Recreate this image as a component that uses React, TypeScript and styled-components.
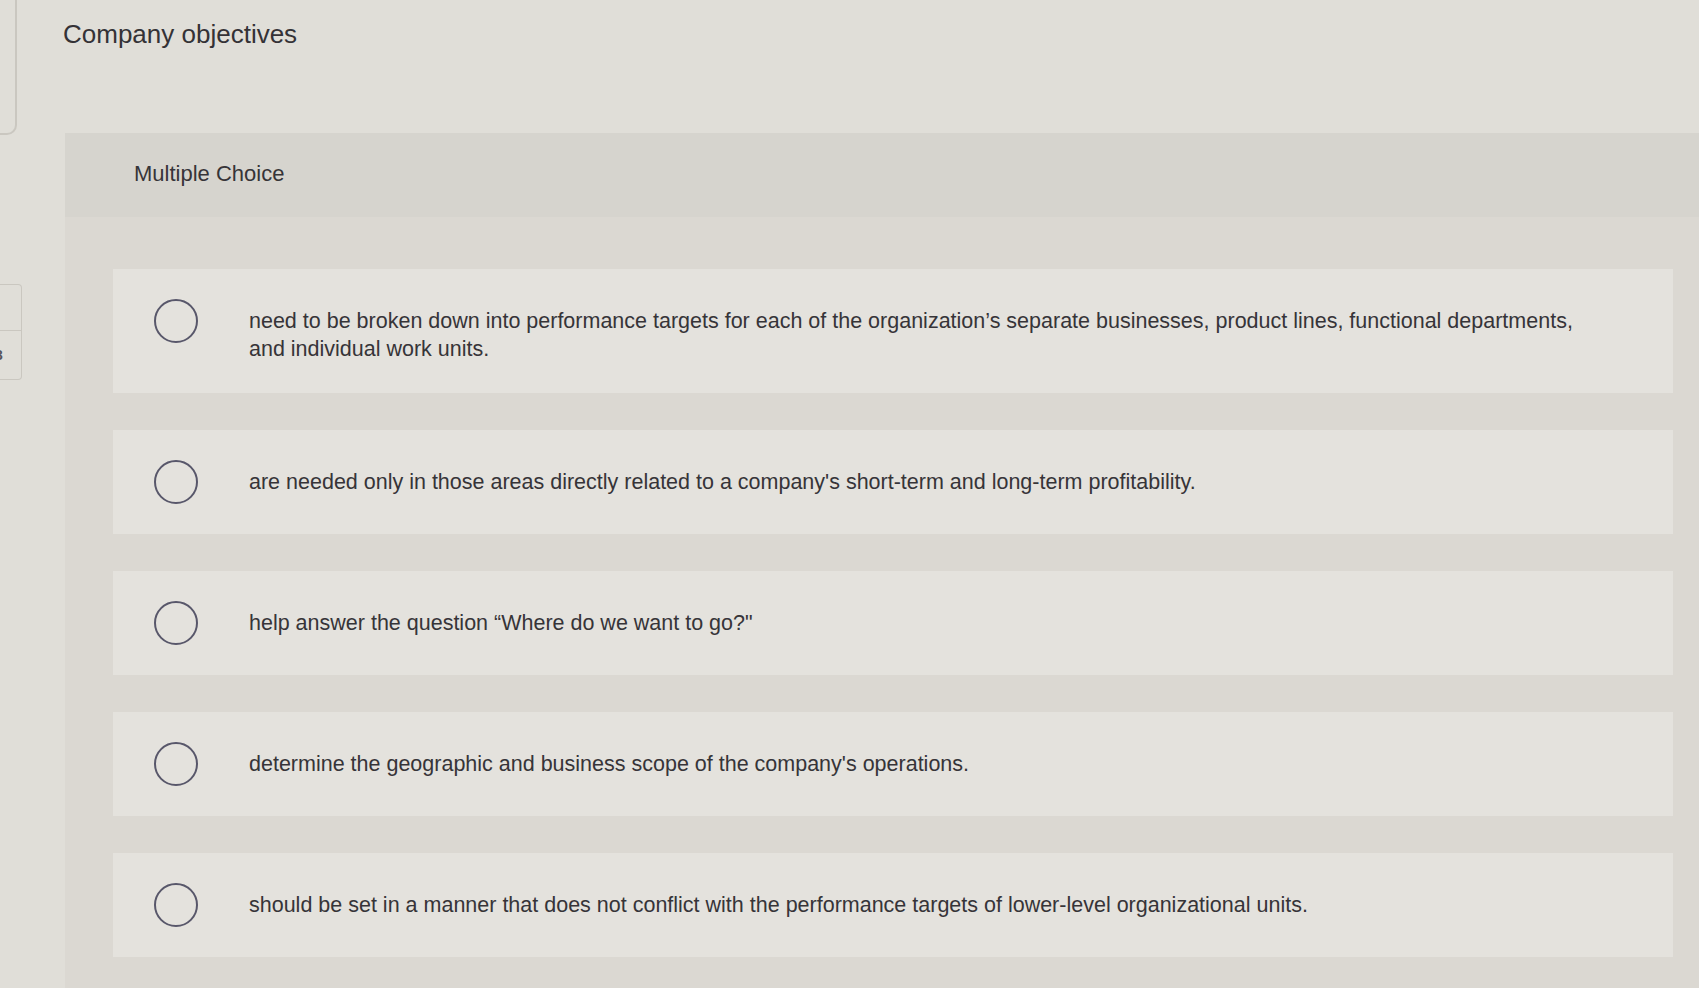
import React from 'react'
import styled, { createGlobalStyle } from 'styled-components'

const GlobalStyle = createGlobalStyle`
  html, body {
    margin: 0;
    padding: 0;
    height: 100%;
    overflow: hidden;
    background: #e0ded8;
    font-family: 'Liberation Sans', Arial, sans-serif;
    color: #363438;
  }
`

const Page = styled.div`
  display: flex;
  width: 100%;
  height: 988px;
`

const Rail = styled.div`
  display: flex;
  flex-direction: column;
  width: 22px;
  flex-shrink: 0;
`

const RailTab = styled.div`
  width: 15px;
  height: 133px;
  border-right: 2px solid #cac7c0;
  border-bottom: 2px solid #cac7c0;
  border-bottom-right-radius: 10px;
`

const RailStack = styled.div`
  margin-top: 149px;
  width: 21px;
  border: 1px solid #cac7c0;
  border-left: none;
  border-radius: 0 4px 4px 0;
  display: flex;
  flex-direction: column;
`

const RailCell = styled.div<{ $h: number }>`
  height: ${({ $h }) => $h}px;
  display: flex;
  align-items: center;
  overflow: hidden;
  & + & {
    border-top: 1px solid #cac7c0;
  }
`

const RailGlyph = styled.span`
  margin-left: -5px;
  font-size: 14px;
  font-weight: 700;
  color: #55535a;
`

const Main = styled.div`
  flex: 1;
  display: flex;
  flex-direction: column;
  padding: 18px 0 0 41px;
  min-width: 0;
`

const Title = styled.h1`
  margin: 0;
  font-size: 26px;
  line-height: 32px;
  font-weight: 400;
  color: #343236;
`

const QuestionPanel = styled.section`
  margin: 83px 0 0 2px;
  background: #dbd8d2;
  display: flex;
  flex-direction: column;
  flex: 1;
`

const PanelHeader = styled.div`
  background: #d6d4ce;
  padding: 28px 0 30px 69px;
  font-size: 22px;
  line-height: 26px;
  color: #363438;
`

const OptionList = styled.div`
  display: flex;
  flex-direction: column;
  gap: 37px;
  padding: 52px 26px 0 48px;
`

const OptionCard = styled.label`
  display: flex;
  align-items: flex-start;
  gap: 51px;
  background: #e4e2dd;
  padding: 30px 80px 30px 41px;
  cursor: pointer;
`

const Radio = styled.span`
  flex-shrink: 0;
  width: 44px;
  height: 44px;
  box-sizing: border-box;
  border: 2px solid #58576a;
  border-radius: 50%;
`

const OptionText = styled.span`
  padding-top: 8px;
  font-size: 21.5px;
  line-height: 28px;
  color: #363438;
`

const options = [
  'need to be broken down into performance targets for each of the organization’s separate businesses, product lines, functional departments, and individual work units.',
  'are needed only in those areas directly related to a company\'s short-term and long-term profitability.',
  'help answer the question “Where do we want to go?"',
  'determine the geographic and business scope of the company\'s operations.',
  'should be set in a manner that does not conflict with the performance targets of lower-level organizational units.'
]

export default function App() {
  return (
    <>
      <GlobalStyle />
      <Page>
        <Rail>
          <RailTab />
          <RailStack>
            <RailCell $h={45} />
            <RailCell $h={48}>
              <RailGlyph>3</RailGlyph>
            </RailCell>
          </RailStack>
        </Rail>
        <Main>
          <Title>Company objectives</Title>
          <QuestionPanel>
            <PanelHeader>Multiple Choice</PanelHeader>
            <OptionList>
              {options.map((text) => (
                <OptionCard key={text}>
                  <Radio />
                  <OptionText>{text}</OptionText>
                </OptionCard>
              ))}
            </OptionList>
          </QuestionPanel>
        </Main>
      </Page>
    </>
  )
}
